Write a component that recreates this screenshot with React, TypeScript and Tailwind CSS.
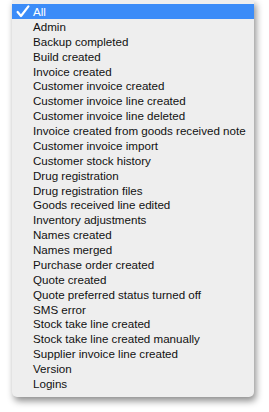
import React from "react";

const items = [
  "All",
  "Admin",
  "Backup completed",
  "Build created",
  "Invoice created",
  "Customer invoice created",
  "Customer invoice line created",
  "Customer invoice line deleted",
  "Invoice created from goods received note",
  "Customer invoice import",
  "Customer stock history",
  "Drug registration",
  "Drug registration files",
  "Goods received line edited",
  "Inventory adjustments",
  "Names created",
  "Names merged",
  "Purchase order created",
  "Quote created",
  "Quote preferred status turned off",
  "SMS error",
  "Stock take line created",
  "Stock take line created manually",
  "Supplier invoice line created",
  "Version",
  "Logins",
];

function Check() {
  return (
    <svg width="14" height="13" viewBox="0 0 14 13" className="absolute left-[4px] top-[1px]">
      <path d="M1.6 7 L5 11 L12.4 1.4" fill="none" stroke="white" strokeWidth="2.2" strokeLinecap="round" strokeLinejoin="round" />
    </svg>
  );
}

export default function App() {
  return (
    <div className="w-[269px] h-[412px] bg-white overflow-hidden">
      <div className="ml-[12px] w-[242px] bg-[#eeeeee] pt-[4px] pb-[6px] rounded-b-[5px] shadow-[2px_4px_7px_rgba(0,0,0,0.45)] font-['Liberation_Sans',Arial,sans-serif] text-[11.6px] text-[#111111]">
        {items.map((label, i) => (
          <div
            key={label}
            className={
              i === 0
                ? "relative h-[14.88px] leading-[15px] pl-[21px] whitespace-nowrap bg-[#3b8cf8] text-white"
                : "relative h-[14.88px] leading-[15px] pl-[21px] whitespace-nowrap"
            }
          >
            {i === 0 && <Check />}
            {label}
          </div>
        ))}
      </div>
    </div>
  );
}
